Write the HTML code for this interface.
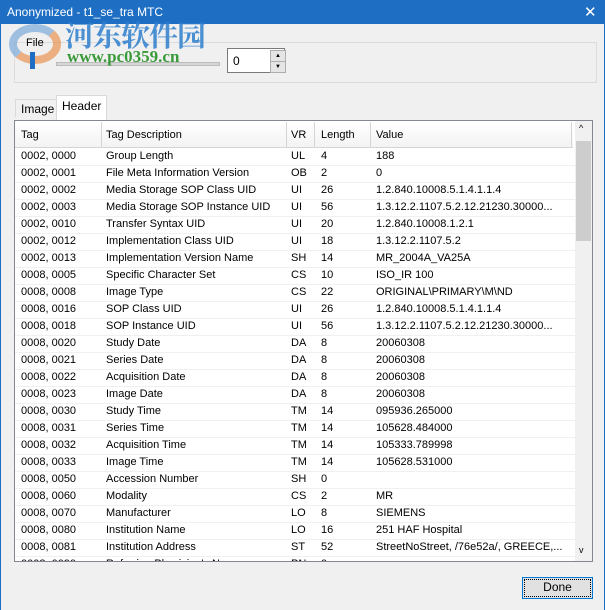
<!DOCTYPE html>
<html><head><style>
body{margin:0;width:605px;height:610px;background:#f0f0f0;font-family:"Liberation Sans",sans-serif;font-size:11px;color:#000;position:relative;overflow:hidden;border-left:1px solid #1e6fc4;border-right:1px solid #1e6fc4;box-sizing:border-box}
.title{position:absolute;left:0;top:0;width:605px;height:24px;background:#1e6fc4;color:#fff;font-size:12px}
.title span{position:absolute;left:6px;top:5px}
.title .x{left:583px;top:3px;font-size:15px}
.grp{position:absolute;left:13px;top:42px;width:581px;height:39px;border:1px solid #dcdcdc}
.slider{position:absolute;left:55px;top:62px;width:162px;height:2px;background:#d6d6d6;border:1px solid #bbb}
.thumb{position:absolute;left:29px;top:52px;width:5px;height:17px;background:#1e6fc4}
.spin{position:absolute;left:226px;top:48px;width:58px;height:25px;background:#fff;border:1px solid #7a7a7a;box-sizing:border-box}
.spin span{position:absolute;left:5px;top:5px;font-size:12px}
.spin .b{position:absolute;left:42px;width:14px;height:10px;border:1px solid #adadad;background:#e5e5e5;font-size:6px;text-align:center;line-height:10px}
.tab{position:absolute;top:97px;height:19px;font-size:12px;line-height:19px;padding:0 5px}
.tbl{position:absolute;left:13px;top:120px;width:579px;height:442px;background:#fff;border:1px solid #828790;box-sizing:border-box;overflow:hidden}
.hdr{position:absolute;left:0;top:1px;width:558px;height:25px;background:linear-gradient(#fff,#f3f3f3);border-bottom:1px solid #d5d5d5}
.c{position:absolute;white-space:nowrap}
.sep{position:absolute;top:1px;width:1px;height:25px;background:#d5d5d5}
.row{position:absolute;left:0;width:560px;height:17px;border-bottom:1px solid #f0f0f0}
.row .c{top:2px}
.sb{position:absolute;left:560px;top:0;width:17px;height:440px;background:#f0f0f0}
.sb .t{position:absolute;left:1px;top:20px;width:15px;height:100px;background:#cdcdcd}
.done{position:absolute;left:521px;top:577px;width:71px;height:22px;border:1px solid #0078d7;background:#e1e1e1;box-sizing:border-box;text-align:center;line-height:19px;font-size:12px;outline:1px dotted #000;outline-offset:-3px}
.wm1{position:absolute;left:64px;top:14px;color:#2f7fcf;font-size:29px;font-weight:bold;font-family:"Noto Serif CJK SC",serif;opacity:.85;letter-spacing:-1px}
.wm2{position:absolute;left:66px;top:47px;color:#3a9a3a;font-size:17px;font-weight:bold;font-family:"Liberation Serif",serif}
</style></head><body>
<div class="title"><span>Anonymized - t1_se_tra MTC</span><span class="x">✕</span></div>
<div class="grp"></div>
<div style="position:absolute;left:8px;top:24px;width:52px;height:40px;border-radius:50%;border:8px solid #e8843a;border-top-color:#6aa0d8;border-left-color:#6aa0d8;opacity:.6;box-sizing:border-box"></div>
<div class="c" style="left:25px;top:37px;font-size:11px">File</div>
<div class="slider"></div><div class="thumb"></div>
<div class="wm1">河东软件园</div><div class="wm2">www.pc0359.cn</div>
<div class="spin"><span>0</span><div class="b" style="top:1px">▲</div><div class="b" style="top:12px">▼</div></div>
<div class="tab" style="left:14px;top:99px;border:1px solid #d9d9d9;border-bottom:none;height:17px">Image</div>
<div class="tab" style="left:55px;top:95px;background:#fff;border:1px solid #d9d9d9;border-bottom:none;height:24px;line-height:20px">Header</div>
<div class="tbl">
<div class="hdr">
<div class="c" style="left:6px;top:7px">Tag</div><div class="c" style="left:91px;top:7px">Tag Description</div><div class="c" style="left:276px;top:7px">VR</div><div class="c" style="left:306px;top:7px">Length</div><div class="c" style="left:361px;top:7px">Value</div>
</div>
<div class="sep" style="left:86px"></div><div class="sep" style="left:271px"></div><div class="sep" style="left:299px"></div><div class="sep" style="left:355px"></div><div class="sep" style="left:556px"></div>
<div id="rows"></div>
<div class="sb"><div style="position:absolute;left:4px;top:2px;font-size:9px">^</div><div class="t"></div><div style="position:absolute;left:4px;top:424px;font-size:9px">v</div></div>
</div>
<div class="done">Done</div>
<script>
var d=[["0002, 0000","Group Length","UL","4","188"],["0002, 0001","File Meta Information Version","OB","2","0"],["0002, 0002","Media Storage SOP Class UID","UI","26","1.2.840.10008.5.1.4.1.1.4"],["0002, 0003","Media Storage SOP Instance UID","UI","56","1.3.12.2.1107.5.2.12.21230.30000..."],["0002, 0010","Transfer Syntax UID","UI","20","1.2.840.10008.1.2.1"],["0002, 0012","Implementation Class UID","UI","18","1.3.12.2.1107.5.2"],["0002, 0013","Implementation Version Name","SH","14","MR_2004A_VA25A"],["0008, 0005","Specific Character Set","CS","10","ISO_IR 100"],["0008, 0008","Image Type","CS","22","ORIGINAL\\PRIMARY\\M\\ND"],["0008, 0016","SOP Class UID","UI","26","1.2.840.10008.5.1.4.1.1.4"],["0008, 0018","SOP Instance UID","UI","56","1.3.12.2.1107.5.2.12.21230.30000..."],["0008, 0020","Study Date","DA","8","20060308"],["0008, 0021","Series Date","DA","8","20060308"],["0008, 0022","Acquisition Date","DA","8","20060308"],["0008, 0023","Image Date","DA","8","20060308"],["0008, 0030","Study Time","TM","14","095936.265000"],["0008, 0031","Series Time","TM","14","105628.484000"],["0008, 0032","Acquisition Time","TM","14","105333.789998"],["0008, 0033","Image Time","TM","14","105628.531000"],["0008, 0050","Accession Number","SH","0",""],["0008, 0060","Modality","CS","2","MR"],["0008, 0070","Manufacturer","LO","8","SIEMENS"],["0008, 0080","Institution Name","LO","16","251 HAF Hospital"],["0008, 0081","Institution Address","ST","52","StreetNoStreet, /76e52a/, GREECE,..."],["0008, 0090","Referring Physician's Name","PN","0",""]];
var x=[6,91,276,306,361],h="";
d.forEach(function(r,i){h+='<div class="row" style="top:'+(27+i*17)+'px">';r.forEach(function(v,j){h+='<div class="c" style="left:'+x[j]+'px">'+v+'</div>'});h+='</div>'});
document.getElementById('rows').innerHTML=h;
</script>
</body></html>
